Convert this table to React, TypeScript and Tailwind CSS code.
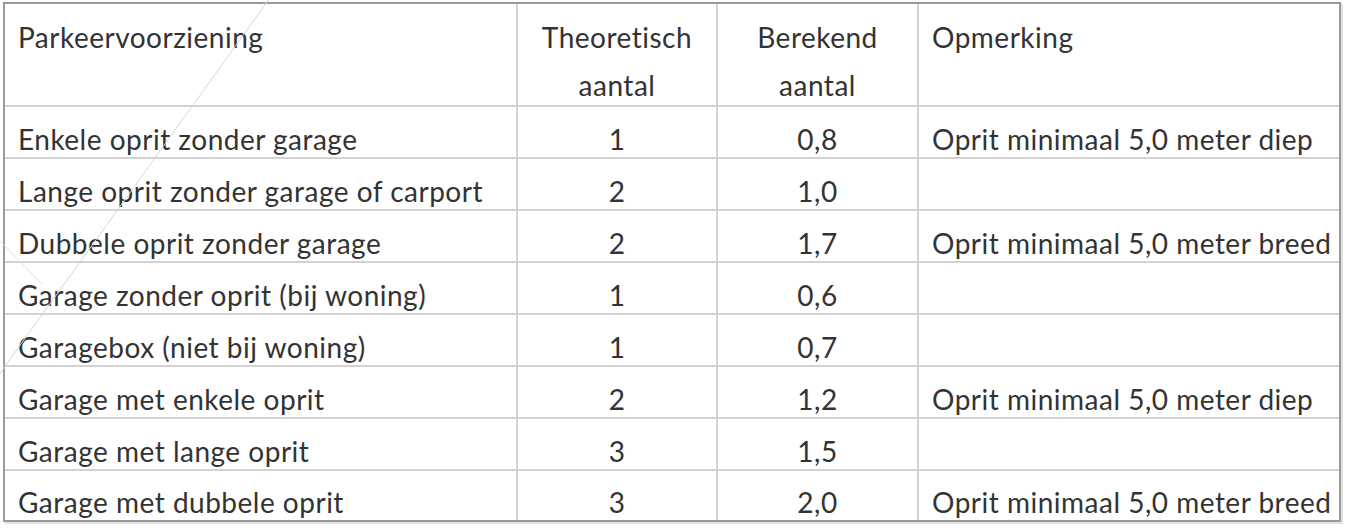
const rows: [string, string, string, string][] = [
  ['Enkele oprit zonder garage', '1', '0,8', 'Oprit minimaal 5,0 meter diep'],
  ['Lange oprit zonder garage of carport', '2', '1,0', ''],
  ['Dubbele oprit zonder garage', '2', '1,7', 'Oprit minimaal 5,0 meter breed'],
  ['Garage zonder oprit (bij woning)', '1', '0,6', ''],
  ['Garagebox (niet bij woning)', '1', '0,7', ''],
  ['Garage met enkele oprit', '2', '1,2', 'Oprit minimaal 5,0 meter diep'],
  ['Garage met lange oprit', '3', '1,5', ''],
  ['Garage met dubbele oprit', '3', '2,0', 'Oprit minimaal 5,0 meter breed'],
];

function Head({ children, center, last }: { children: React.ReactNode; center?: boolean; last?: boolean }) {
  return (
    <th className={`border-b-2 ${last ? '' : 'border-r-2'} border-[#d2d2d2] align-top font-normal p-0 ${center ? 'text-center' : 'text-left pl-[13px]'}`}>
      <div className="h-[101px] pt-[9px] leading-[48px]">{children}</div>
    </th>
  );
}

export default function App() {
  return (
    <div className="relative w-[1346px] h-[529px] bg-white overflow-hidden font-['Lato','Liberation_Sans',sans-serif] text-[#333333]">
      <div className="ml-[3px] mt-[2px] w-[1338px] border-2 border-[#9a9a9a] shadow-[2px_2px_0_#e2e2e2]">
        <table className="w-full table-fixed border-collapse text-[28px] tracking-[0.5px]">
          <colgroup>
            <col className="w-[512px]" />
            <col className="w-[200px]" />
            <col className="w-[201px]" />
            <col />
          </colgroup>
          <thead>
            <tr>
              <Head>Parkeervoorziening</Head>
              <Head center>
                Theoretisch
                <br />
                aantal
              </Head>
              <Head center>
                Berekend
                <br />
                aantal
              </Head>
              <Head last>Opmerking</Head>
            </tr>
          </thead>
          <tbody>
            {rows.map((r, i) => {
              const last = i === rows.length - 1;
              const b = last ? '' : 'border-b-2';
              return (
                <tr key={i} className={last ? 'h-[50px]' : 'h-[52px]'}>
                  <td className={`${b} border-r-2 border-[#d2d2d2] align-bottom p-0 pl-[13px] leading-[36px] whitespace-nowrap`}>{r[0]}</td>
                  <td className={`${b} border-r-2 border-[#d2d2d2] align-bottom p-0 text-center leading-[36px]`}>{r[1]}</td>
                  <td className={`${b} border-r-2 border-[#d2d2d2] align-bottom p-0 text-center leading-[36px]`}>{r[2]}</td>
                  <td className={`${b} border-[#d2d2d2] align-bottom p-0 pl-[13px] leading-[36px] whitespace-nowrap`}>{r[3]}</td>
                </tr>
              );
            })}
          </tbody>
        </table>
      </div>
      {/* faint scan lines over the table */}
      <svg className="absolute inset-0 pointer-events-none" width="1346" height="529">
        <line x1="270" y1="-2" x2="-2" y2="376" stroke="#d6d6d6" strokeWidth="1" />
        <line x1="0" y1="241" x2="42" y2="284" stroke="#e0e0e0" strokeWidth="1" />
      </svg>
    </div>
  );
}
